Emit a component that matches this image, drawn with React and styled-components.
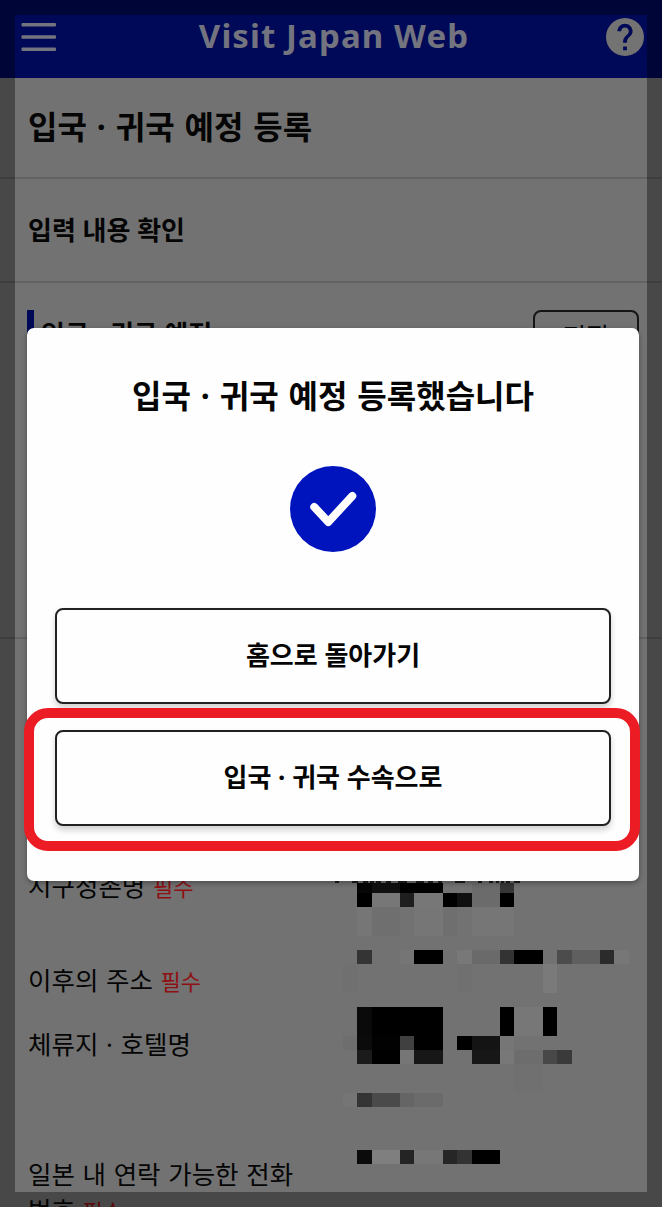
import React from 'react';
import styled, { createGlobalStyle } from 'styled-components';

const GlobalStyle = createGlobalStyle`
  * {
    box-sizing: border-box;
  }

  body {
    margin: 0;
    overflow: hidden;
    font-family: 'Noto Sans', 'Noto Sans CJK KR', sans-serif;
    color: #050505;
  }
`;

const Page = styled.div`
  position: relative;
  width: 662px;
  height: 1207px;
  overflow: hidden;
  background-color: #727272;
`;

const Header = styled.header`
  display: flex;
  align-items: center;
  justify-content: space-between;
  height: 78px;
  padding: 0 18px 4px 21px;
  background-color: #000957;
`;

const HeaderTitle = styled.h1`
  margin: 0 0 2px 5px;
  font-size: 33px;
  font-weight: 700;
  line-height: 40px;
  letter-spacing: 1.1px;
  color: #73747f;
`;

const Section = styled.section`
  height: ${({ $height }) => $height}px;
  padding: ${({ $padding }) => $padding || '0 28px'};
  border-bottom: 2px solid #626262;
`;

const PageTitle = styled.h2`
  margin: 0;
  font-size: 32px;
  font-weight: 700;
  line-height: 98px;
  word-spacing: 1.6px;
`;

const SubTitle = styled.h3`
  margin: 0;
  font-size: 26px;
  font-weight: 700;
  line-height: 102px;
`;

const PlanRow = styled.div`
  display: flex;
  justify-content: space-between;
`;

const PlanTitle = styled.h3`
  height: 54px;
  margin: 0;
  padding-left: 7px;
  border-left: 7px solid #000957;
  font-size: 26px;
  font-weight: 700;
  line-height: 48px;
`;

const EditButton = styled.button`
  width: 106px;
  height: 52px;
  padding: 0;
  border: 2px solid #151515;
  border-radius: 8px;
  background: transparent;
  font-family: inherit;
  font-size: 25px;
  line-height: 48px;
  color: #050505;
`;

const Details = styled.section`
  display: grid;
  grid-template-columns: 307px 298px;
  padding: 229px 0 0 28px;
`;

const Labels = styled.div`
  display: flex;
  flex-direction: column;
`;

const Label = styled.p`
  height: ${({ $height }) => $height}px;
  margin: 0;
  padding-right: 22px;
  font-size: 25.5px;
  line-height: 36px;
  word-spacing: 1px;
`;

const Required = styled.span`
  font-size: 22px;
  color: #8f0f13;
`;

const Frame = styled.div`
  position: absolute;
  inset: 0;
  border: 15px solid rgba(0, 0, 0, 0.37);
`;

const Modal = styled.div`
  position: absolute;
  top: 328px;
  left: 27px;
  display: flex;
  flex-direction: column;
  align-items: center;
  width: 612px;
  height: 553px;
  padding: 43px 28px 0;
  border-radius: 7px;
  background-color: #fefefe;
  box-shadow: 0 2px 5px rgba(0, 0, 0, 0.35);
`;

const ModalTitle = styled.h2`
  margin: 0 0 45px;
  font-size: 32px;
  font-weight: 700;
  line-height: 50px;
  word-spacing: 1.6px;
  white-space: nowrap;
`;

const Actions = styled.div`
  display: flex;
  flex-direction: column;
  gap: 26px;
  width: 100%;
  margin-top: 56px;
`;

const ActionButton = styled.button`
  width: 556px;
  height: 96px;
  padding: 0 0 2px;
  border: 2px solid #232021;
  border-radius: 8px;
  background-color: #fefefe;
  box-shadow: 0 4px 6px rgba(0, 0, 0, 0.18);
  font-family: inherit;
  font-size: 26px;
  font-weight: 700;
  line-height: 40px;
  color: #050505;
`;

const Highlight = styled.div`
  position: absolute;
  top: 708px;
  left: 24px;
  width: 616px;
  height: 143px;
  border: 10px solid #ec1c24;
  border-radius: 24px;
  pointer-events: none;
`;

const MenuIcon = () => (
  <svg width="36" height="30" viewBox="0 0 36 30" fill="#73747f">
    <rect x="0.5" y="1" width="34.5" height="3.6" rx="1" />
    <rect x="0.5" y="13.2" width="34.5" height="3.6" rx="1" />
    <rect x="0.5" y="25.4" width="34.5" height="3.6" rx="1" />
  </svg>
);

const HelpIcon = () => (
  <svg width="38" height="38" viewBox="2 2 20 20">
    <path
      fill="#737373"
      d="M12 2C6.48 2 2 6.48 2 12s4.48 10 10 10 10-4.48 10-10S17.52 2 12 2zm1 17h-2v-2h2v2zm2.07-7.75l-.9.92C13.45 12.9 13 13.5 13 15h-2v-.5c0-1.1.45-2.1 1.17-2.83l1.24-1.26c.37-.36.59-.86.59-1.41 0-1.1-.9-2-2-2s-2 .9-2 2H8c0-2.21 1.79-4 4-4s4 1.79 4 4c0 .88-.36 1.68-.93 2.25z"
      stroke="#737373"
      strokeWidth="0"
    />
  </svg>
);

const CheckIcon = () => (
  <svg width="86" height="86" viewBox="0 0 86 86">
    <circle cx="43" cy="43" r="43" fill="#0014be" />
    <path
      d="M24.3 41L38.3 56L62.3 30"
      fill="none"
      stroke="#fefefe"
      strokeWidth="8"
      strokeLinecap="round"
      strokeLinejoin="round"
    />
  </svg>
);

// masked values: [column, row, columns, rows, colour]
const CELLS = [
  [1, 0, 1, 1, '#060606'],
  [2, 0, 2, 1, '#101010'],
  [4, 0, 3, 1, '#000000'],
  [9, 0, 2, 1, '#6b6b6b'],
  [11, 0, 1, 1, '#363636'],
  [1, 1, 1, 1, '#000000'],
  [2, 1, 2, 1, '#777777'],
  [4, 1, 1, 1, '#1e1e1e'],
  [5, 1, 2, 1, '#777777'],
  [7, 1, 1, 1, '#000000'],
  [8, 1, 1, 1, '#0f0f0f'],
  [9, 1, 2, 1, '#6b6b6b'],
  [11, 1, 1, 1, '#000000'],
  [1, 2, 1, 2, '#767676'],
  [2, 2, 2, 2, '#6f6f6f'],
  [5, 2, 2, 2, '#767676'],
  [7, 2, 1, 2, '#6f6f6f'],
  [9, 2, 3, 2, '#767676'],
  [1, 5, 1, 1, '#343434'],
  [4, 5, 1, 1, '#757575'],
  [5, 5, 2, 1, '#000000'],
  [8, 5, 1, 1, '#787878'],
  [9, 5, 2, 1, '#6a6a6a'],
  [11, 5, 1, 1, '#333333'],
  [12, 5, 2, 1, '#000000'],
  [15, 5, 1, 1, '#4c4c4c'],
  [16, 5, 2, 1, '#5f5f5f'],
  [18, 5, 1, 1, '#2b2b2b'],
  [19, 5, 1, 1, '#777777'],
  [0, 6, 1, 2, '#707070'],
  [8, 6, 1, 2, '#707070'],
  [14, 6, 1, 2, '#7a7a7a'],
  [1, 9, 1, 2, '#0a0a0a'],
  [2, 9, 5, 2, '#000000'],
  [11, 9, 1, 2, '#000000'],
  [12, 9, 2, 2, '#777777'],
  [14, 9, 1, 2, '#000000'],
  [0, 11, 1, 1, '#6e6e6e'],
  [1, 11, 1, 1, '#0b0b0b'],
  [2, 11, 2, 1, '#020202'],
  [4, 11, 1, 1, '#404040'],
  [5, 11, 2, 1, '#000000'],
  [8, 11, 1, 1, '#000000'],
  [9, 11, 2, 1, '#141414'],
  [11, 11, 1, 1, '#767676'],
  [1, 12, 1, 1, '#1b1b1b'],
  [2, 12, 2, 1, '#000000'],
  [4, 12, 1, 1, '#767676'],
  [5, 12, 2, 1, '#171717'],
  [9, 12, 2, 1, '#171717'],
  [11, 12, 1, 1, '#787878'],
  [12, 12, 2, 1, '#6d6d6d'],
  [14, 12, 1, 1, '#484848'],
  [15, 12, 1, 1, '#3a3a3a'],
  [12, 13, 2, 2, '#707070'],
  [0, 15, 1, 1, '#757575'],
  [1, 15, 1, 1, '#343434'],
  [2, 15, 2, 1, '#4a4a4a'],
  [4, 15, 1, 1, '#656565'],
  [5, 15, 2, 1, '#6b6b6b'],
  [1, 19, 1, 1, '#0b0b0b'],
  [2, 19, 2, 1, '#7f7f7f'],
  [4, 19, 1, 1, '#242424'],
  [5, 19, 2, 1, '#777777'],
  [7, 19, 1, 1, '#262626'],
  [8, 19, 1, 1, '#333333'],
  [9, 19, 2, 1, '#000000'],
];

// unmasked edge of the first value: [x, width]
const EDGE = [
  [0, 4], [17, 6], [28, 5], [35, 4], [41, 5], [51, 5], [63, 9], [81, 8],
  [93, 5], [103, 4], [120, 10], [143, 4], [154, 4], [161, 3], [166, 3], [171, 4], [179, 6],
];

const SIZE = 100 / 7;
const col = (n) => Math.round(n * SIZE) + 8;
// the first row is cut 4px short
const row = (n) => (n === 0 ? 4 : Math.floor(n * SIZE + 0.01));

const Masked = styled.svg`
  display: block;
  margin-top: 11px;
`;

const MaskedValues = () => (
  <Masked width="298" height="320" viewBox="0 0 298 320" shapeRendering="crispEdges">
    {EDGE.map(([x, w]) => (
      <rect key={x} x={x} y="2" width={w} height="2" fill="#1c1c1c" />
    ))}
    {CELLS.map(([x, y, w, h, fill]) => (
      <rect
        key={`${x}-${y}`}
        x={col(x)}
        y={row(y)}
        width={col(x + w) - col(x)}
        height={row(y + h) - row(y)}
        fill={fill}
      />
    ))}
  </Masked>
);

const App = () => {
  return (
    <Page>
      <GlobalStyle />
      <Header>
        <MenuIcon />
        <HeaderTitle>Visit Japan Web</HeaderTitle>
        <HelpIcon />
      </Header>
      <Section $height={101}>
        <PageTitle>입국 · 귀국 예정 등록</PageTitle>
      </Section>
      <Section $height={104}>
        <SubTitle>입력 내용 확인</SubTitle>
      </Section>
      <Section $height={356} $padding="27px 23px 0 27px">
        <PlanRow>
          <PlanTitle>입국 · 귀국 예정</PlanTitle>
          <EditButton>편집</EditButton>
        </PlanRow>
      </Section>
      <Details>
        <Labels>
          <Label $height={94}>시구정촌명 <Required>필수</Required></Label>
          <Label $height={64}>이후의 주소 <Required>필수</Required></Label>
          <Label $height={130}>체류지 · 호텔명</Label>
          <Label $height={72}>일본 내 연락 가능한 전화번호 <Required>필수</Required></Label>
        </Labels>
        <MaskedValues />
      </Details>
      <Frame />
      <Modal>
        <ModalTitle>입국 · 귀국 예정 등록했습니다</ModalTitle>
        <CheckIcon />
        <Actions>
          <ActionButton>홈으로 돌아가기</ActionButton>
          <ActionButton>입국 · 귀국 수속으로</ActionButton>
        </Actions>
      </Modal>
      <Highlight />
    </Page>
  );
};

export default App;
